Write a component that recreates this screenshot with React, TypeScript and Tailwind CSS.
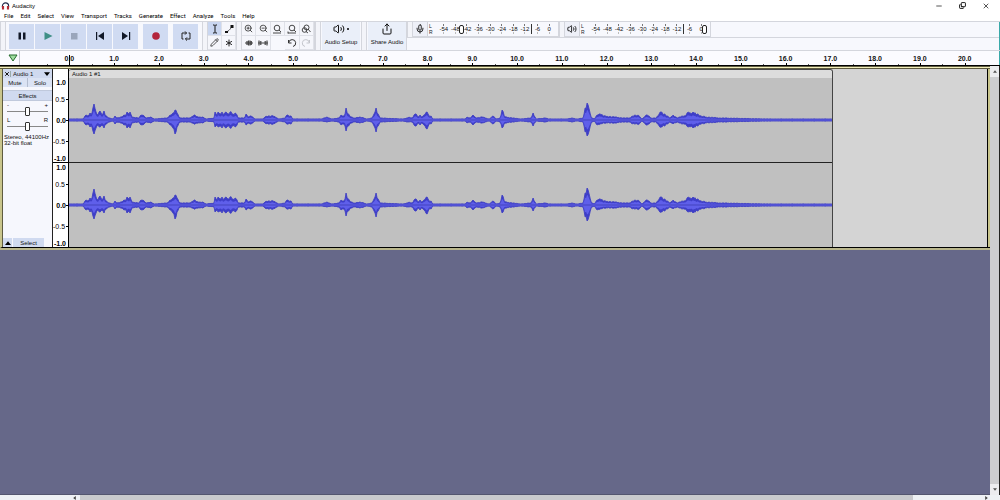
import React from 'react';
import { Asterisk, Copy, Mic, Minus, Pencil, Redo, Share, Undo, Volume2, X, ZoomIn, ZoomOut } from 'lucide-react';

const MENUS = ['File', 'Edit', 'Select', 'View', 'Transport', 'Tracks', 'Generate', 'Effect', 'Analyze', 'Tools', 'Help'];
const METER_MARKS = ['-54', '-48', '-42', '-36', '-30', '-24', '-18', '-12', '-6', '0'];
const SECONDS = Array.from({ length: 21 }, (_, i) => i.toFixed(1));

// [x, peak above, peak below] in clip pixels
const PEAKS: [number, number, number?][] = [
  [0, 1], [14, 1], [17, 5], [19, 4], [21, 7], [23, 7], [25, 16, 14], [27, 8], [29, 5], [31, 9, 7], [33, 5], [35, 9, 8],
  [37, 4], [40, 2], [44, 1], [46, 4], [48, 2], [53, 3], [55, 5], [57, 5], [58, 8], [60, 6], [61, 8], [63, 3], [70, 2],
  [72, 5], [75, 4], [77, 2], [82, 3], [85, 1], [98, 2], [101, 5], [104, 7, 8], [106, 10, 14], [108, 7], [111, 2], [121, 2],
  [125, 5, 4], [129, 3], [134, 3], [137, 1], [145, 2], [146, 8, 7], [148, 5], [149, 8, 7], [151, 6], [153, 8], [155, 6],
  [157, 8], [159, 6], [161, 8], [164, 6], [166, 7], [168, 5], [169, 2], [175, 2], [177, 6, 5], [179, 3], [182, 4], [186, 1],
  [194, 1], [197, 4], [204, 4], [210, 1], [216, 2], [218, 5, 4], [222, 4], [224, 1], [252, 1], [258, 3, 2], [262, 1],
  [270, 2], [272, 5], [274, 4], [276, 6], [277, 12, 11], [279, 6], [282, 3], [285, 2], [291, 3], [298, 1], [303, 2],
  [305, 6], [307, 12], [309, 6], [311, 2], [334, 1], [338, 2], [340, 3, 2], [343, 2], [345, 5], [347, 6], [349, 3],
  [351, 5], [353, 3], [355, 5], [358, 8, 9], [360, 4], [362, 4], [364, 1], [396, 1], [398, 3], [401, 2], [404, 5], [407, 2],
  [413, 3], [420, 1], [424, 4], [427, 1], [431, 2], [433, 10, 8], [436, 3], [444, 2], [451, 1], [462, 2], [464, 7, 6],
  [467, 1], [476, 2], [480, 1], [498, 1], [503, 2], [508, 1], [514, 2], [516, 12], [518, 17, 16], [520, 11], [522, 3],
  [525, 1], [528, 5], [531, 6, 4], [535, 4, 3], [545, 3], [554, 2], [561, 2], [563, 4], [566, 5, 4], [570, 4], [573, 1],
  [576, 4], [578, 5], [582, 2], [587, 2], [590, 6], [592, 8, 7], [595, 6], [598, 4], [601, 2], [604, 5, 4], [608, 2],
  [613, 4], [616, 4], [619, 8, 7], [622, 6], [624, 8], [628, 6], [632, 4], [637, 3], [651, 2], [700, 1], [763, 1],
];

// one sample per pixel between the peaks, slightly roughened
const SAMPLES = PEAKS.slice(1).flatMap(([x1, up1, down1 = up1], i) => {
  const [x0, up0, down0 = up0] = PEAKS[i];
  return Array.from({ length: x1 - x0 }, (_, step) => {
    const t = step / (x1 - x0);
    const x = x0 + step;
    const rough = step === 0 ? 1 : 0.8 + ((x * 37) % 11) / 30;
    return [x, (up0 + (up1 - up0) * t) * rough, (down0 + (down1 - down0) * t) * rough];
  });
});

function outline(scale: number) {
  const top = SAMPLES.map(([x, up]) => `${x},${42 - Math.max(1, up * scale)}`);
  const bottom = SAMPLES.map(([x, , down]) => `${x},${42 + Math.max(1, down * scale)}`).reverse();
  return [...top, '763,41', '763,43', ...bottom].join(' ');
}

function Waveform() {
  return (
    <svg viewBox="0 0 763 84" preserveAspectRatio="none" className="block h-[84px] w-full bg-[#c0c0c0]">
      <polygon points={outline(1)} fill="#3e3ec8" stroke="#4141c4" strokeWidth="0.9" />
      <polygon points={outline(0.6)} fill="#5f5fea" />
      <path d="M0 42H763" stroke="#3c3cb4" strokeWidth="0.8" />
    </svg>
  );
}

function AmplitudeScale() {
  return (
    <div className="flex h-[84px] flex-col text-right text-[7px] leading-none text-black">
      <div className="flex h-2 items-center justify-end pr-0.5 font-bold">1.0</div>
      <div className="flex h-[26px] items-center justify-end gap-px">0.5<i className="h-px w-0.5 bg-black" /></div>
      <div className="flex h-4 items-center justify-end font-bold">0.0<i className="h-px w-0.5 bg-black" /></div>
      <div className="flex h-[26px] items-center justify-end gap-px">-0.5<i className="h-px w-0.5 bg-black" /></div>
      <div className="flex h-2 items-center justify-end pr-0.5 font-bold">-1.0</div>
    </div>
  );
}

function TransportButton({ label, className = '', children }: { label: string; className?: string; children: React.ReactNode }) {
  return (
    <button aria-label={label} className={`flex h-[25px] w-[25px] items-center justify-center bg-[#d0dbf2] ${className}`}>
      <svg viewBox="0 0 12 12" className="h-3 w-3">{children}</svg>
    </button>
  );
}

function ToolButton({ label, active, children }: { label: string; active?: boolean; children?: React.ReactNode }) {
  return (
    <button
      aria-label={label}
      className={`flex items-center justify-center border-r border-b border-[#dfe1e8] text-[#222] ${active ? 'bg-[#c9d6f0]' : 'bg-[#f5f6fb]'}`}
    >
      {children}
    </button>
  );
}

function Grip() {
  return <div className="w-1.5 shrink-0 border-x border-[#d4d6dd] bg-[#f3f4f9]" />;
}

function Meter({ label, icon, value }: { label: string; icon: React.ReactNode; value: number }) {
  return (
    <div className="flex h-[15px] items-stretch border-r border-b border-[#d4d6dd]">
      <button aria-label={label} className="flex w-[15px] items-center justify-center border-r border-[#cfd1d8] bg-[#eef0f8]">{icon}</button>
      <div className="flex w-2.5 flex-col justify-center pl-px text-[5px] leading-[6px] text-[#222]">
        <span>L</span>
        <span>R</span>
      </div>
      <div className="relative flex w-[120px] items-center pr-[3px] text-[6px] leading-none text-[#111]">
        {METER_MARKS.map(mark => (
          <span key={mark} className={`flex flex-1 flex-col items-center ${mark === '-6' ? 'border-l border-[#333]' : ''}`}>
            <i className="h-0.5 w-px bg-[#777]" />
            {mark}
            <i className="h-0.5 w-px bg-[#bbb]" />
          </span>
        ))}
        <input
          type="range"
          aria-label={`${label} level`}
          defaultValue={value}
          className="absolute inset-0 m-0 h-full w-full appearance-none bg-transparent [&::-webkit-slider-thumb]:h-[9px] [&::-webkit-slider-thumb]:w-[5px] [&::-webkit-slider-thumb]:appearance-none [&::-webkit-slider-thumb]:rounded-[2px] [&::-webkit-slider-thumb]:border [&::-webkit-slider-thumb]:border-[#222] [&::-webkit-slider-thumb]:bg-white"
        />
      </div>
    </div>
  );
}

function TrackSlider({ label, left, right }: { label: string; left: string; right: string }) {
  return (
    <label className="flex h-[15px] flex-col px-1 text-[6px] leading-[5px] text-[#111]">
      <span className="flex justify-between">
        <span>{left}</span>
        <span>{right}</span>
      </span>
      <input
        type="range"
        aria-label={label}
        className="-mt-px h-[9px] w-full appearance-none bg-[linear-gradient(#888,#888)] bg-[length:100%_1px] bg-center bg-no-repeat [&::-webkit-slider-thumb]:h-[9px] [&::-webkit-slider-thumb]:w-[5px] [&::-webkit-slider-thumb]:appearance-none [&::-webkit-slider-thumb]:rounded-[1px] [&::-webkit-slider-thumb]:border [&::-webkit-slider-thumb]:border-[#333] [&::-webkit-slider-thumb]:bg-white"
      />
    </label>
  );
}

function TitleBar() {
  return (
    <header className="flex h-[11px] items-center bg-white pl-px text-[6px] leading-none text-black">
      <svg viewBox="0 0 10 9" className="mr-0.5 h-2 w-[9px]">
        <path d="M1.5 6V4.5a3.5 3.5 0 0 1 7 0V6" fill="none" stroke="#222a4a" strokeWidth="1.3" />
        <path d="M1 4.5h2.4V8.500H1zM6.600 4.500H9V8.500H6.600z" fill="#b52a35" />
      </svg>
      <h1 className="flex-1">Audacity</h1>
      <div className="flex gap-4 pr-2.5">
        <button aria-label="Minimize"><Minus className="h-2 w-2" /></button>
        <button aria-label="Restore"><Copy className="h-[7px] w-[7px] -scale-x-100 rotate-180" strokeWidth={3} /></button>
        <button aria-label="Close"><X className="h-2 w-2" /></button>
      </div>
    </header>
  );
}

function Toolbar() {
  return (
    <div className="flex h-[30px] items-stretch border-y border-[#d4d6dd] bg-[#f7f8fd]">
      <Grip />
      <div className="flex items-center gap-px pl-[3px]">
        <TransportButton label="Pause"><path d="M2.500 2.500H5v7H2.500zM7 2.500h2.500v7H7z" fill="#111827" /></TransportButton>
        <TransportButton label="Play"><path d="M2.500 2l8 4-8 4z" fill="#3f8f86" /></TransportButton>
        <TransportButton label="Stop"><path d="M3 3h6.500v6.500H3z" fill="#9aa6bb" /></TransportButton>
        <TransportButton label="Skip to start"><path d="M2 2h1.200v8H2zM10 2v8L4 6z" fill="#111827" /></TransportButton>
        <TransportButton label="Skip to end"><path d="M9 2h1.200v8H9zM2 2v8l6-4z" fill="#111827" /></TransportButton>
        <TransportButton label="Record" className="ml-1"><circle cx="6" cy="6" r="3.800" fill="#b3243c" /></TransportButton>
        <TransportButton label="Loop" className="ml-1">
          <path d="M6.500 3H2v6h1.500M5.500 9H10V3H8.500M5 1.400L6.600 3 5 4.600M7 7.400L5.400 9 7 10.600" fill="none" stroke="#222" strokeWidth="1" />
        </TransportButton>
      </div>
      <div className="ml-1 flex"><Grip /></div>
      <div className="grid w-7 grid-cols-2 grid-rows-2">
        <ToolButton label="Selection tool" active>
          <svg viewBox="0 0 8 10" className="h-2.5 w-2"><path d="M2 1h1.500L4 1.500 4.500 1H6M4 1.500v7M2 9h1.500L4 8.500l.5.5H6" fill="none" stroke="#111" /></svg>
        </ToolButton>
        <ToolButton label="Envelope tool">
          <svg viewBox="0 0 10 10" className="h-2.5 w-2.5">
            <path d="M2 8c2-.5 4-2 6-6" fill="none" stroke="#222" strokeWidth="0.800" />
            <path d="M1 7h3v2H1zM6.500 1h3v3h-3z" fill="#111" />
          </svg>
        </ToolButton>
        <ToolButton label="Draw tool"><Pencil className="h-[9px] w-[9px]" /></ToolButton>
        <ToolButton label="Multi-tool"><Asterisk className="h-3 w-3" /></ToolButton>
      </div>
      <Grip />
      <div className="grid w-[73px] grid-cols-5 grid-rows-2 border-r border-[#d4d6dd]">
        <ToolButton label="Zoom in"><ZoomIn className="h-[9px] w-[9px]" /></ToolButton>
        <ToolButton label="Zoom out"><ZoomOut className="h-[9px] w-[9px]" /></ToolButton>
        <ToolButton label="Fit selection to width">
          <svg viewBox="0 0 10 10" className="h-2.5 w-2.5" fill="none" stroke="#333" strokeWidth="0.900"><circle cx="5" cy="4" r="2.800" /><path d="M1 9h8M7 6l2 2" /></svg>
        </ToolButton>
        <ToolButton label="Fit project to width">
          <svg viewBox="0 0 10 10" className="h-2.5 w-2.5" fill="none" stroke="#333" strokeWidth="0.900"><circle cx="5" cy="4" r="2.800" /><path d="M1 9h8M1 7.500v2M7 6l2 2" /></svg>
        </ToolButton>
        <ToolButton label="Zoom toggle">
          <svg viewBox="0 0 10 10" className="h-2.5 w-2.5" fill="none" stroke="#333" strokeWidth="0.900"><circle cx="5.500" cy="3.500" r="2.500" /><circle cx="3.500" cy="6" r="2.300" /><path d="M7 5l2.500 3M5 7.500l2 1.500" /></svg>
        </ToolButton>
        <ToolButton label="Trim audio">
          <svg viewBox="0 0 10 8" className="h-2 w-2.5"><path d="M1 4h8M3 2v4M4.500 1.500v5M6 1.500v5M7.300 2v4" stroke="#444" strokeWidth="1.200" /></svg>
        </ToolButton>
        <ToolButton label="Silence audio">
          <svg viewBox="0 0 10 8" className="h-2 w-2.5"><path d="M0 4h10M1 1.500v5M2.800 2v4M7.200 2v4M9 1.500v5" stroke="#444" strokeWidth="1.200" /></svg>
        </ToolButton>
        <span />
        <ToolButton label="Undo">
          <svg viewBox="0 0 10 10" className="h-2.5 w-2.5" fill="none" stroke="#333"><path d="M1.500 2v3h3M1.700 4.800A3.500 3.500 0 1 1 6 8.500" /></svg>
        </ToolButton>
        <ToolButton label="Redo">
          <svg viewBox="0 0 10 10" className="h-2.5 w-2.5" fill="none" stroke="#c4c6cc"><path d="M8.500 2v3h-3M8.300 4.800A3.500 3.500 0 1 0 4 8.500" /></svg>
        </ToolButton>
      </div>
      <div className="flex gap-px text-[6px] leading-none text-[#111]">
        <Grip />
        <button className="flex w-[38px] flex-col items-center justify-end gap-1 bg-[#eaeff9] pb-[5px] whitespace-nowrap">
          <span className="flex items-center gap-0.5"><Volume2 className="h-3 w-3" /><i className="h-0.5 w-0.5 rounded-full bg-black" /></span>
          Audio Setup
        </button>
        <Grip />
        <button className="flex w-[38px] flex-col items-center justify-end gap-1 bg-[#eaeff9] pb-[5px] whitespace-nowrap">
          <Share className="h-3 w-3" />
          Share Audio
        </button>
      </div>
      <div className="flex flex-1 flex-col border-l border-[#d4d6dd]">
        <div className="flex border-b border-[#d4d6dd]">
          <Grip />
          <Meter label="Record meter" icon={<Mic className="h-2.5 w-2.5" />} value={18} />
          <Grip />
          <Meter label="Playback meter" icon={<Volume2 className="h-2.5 w-2.5" />} value={97} />
        </div>
      </div>
      <div className="w-px bg-[#3aa9a9]" />
    </div>
  );
}

function Timeline() {
  return (
    <div className="flex h-[15px] border-b border-black bg-[#fbfbff]">
      <button aria-label="Timeline options" className="flex w-5 items-center justify-end border-r border-[#c6c8cf] pr-px">
        <svg viewBox="0 0 10 8" className="h-2 w-2.5"><path d="M1 1h8L5 7z" fill="#9fdc9f" stroke="#246b2c" /></svg>
      </button>
      <div className="mr-3 ml-[27px] flex flex-1 text-[7px] leading-none font-bold text-[#111]">
        {SECONDS.map((second, i) => (
          <div key={second} className="relative flex flex-1 flex-col justify-end text-center">
            {second}
            {i === 0 && <i className="absolute top-1 left-1/2 h-[10px] w-px bg-black" />}
            <div className="flex h-[3px] items-end">
              <div className="h-px flex-1 border-l border-[#555]" />
              <div className="h-0.5 flex-1 border-l border-black" />
            </div>
          </div>
        ))}
      </div>
      <div className="w-px bg-[#3aa9a9]" />
    </div>
  );
}

function TrackPanel() {
  return (
    <div className="flex w-[50px] shrink-0 flex-col border-r border-[#222] bg-[#f6f7fd] text-[6px] leading-none text-[#111]">
      <div className="flex h-[9px] items-center bg-[#cfd9ef]">
        <button aria-label="Close track" className="flex w-2 justify-center border-r border-[#9aa]"><X className="h-1.5 w-1.5" strokeWidth={4} /></button>
        <button className="flex flex-1 items-center justify-between px-0.5">
          Audio 1
          <svg viewBox="0 0 8 5" className="h-1 w-1.5"><path d="M0 0h8L4 5z" /></svg>
        </button>
      </div>
      <div className="grid h-[9px] grid-cols-2 gap-px bg-[#b4bdd0]">
        <button className="bg-[#dbe3f4]">Mute</button>
        <button className="bg-[#dbe3f4]">Solo</button>
      </div>
      <button className="mt-[3px] mb-0.5 h-[11px] border-y border-[#c0c9dc] bg-[#d0daf0]">Effects</button>
      <TrackSlider label="Gain" left="-" right="+" />
      <TrackSlider label="Pan" left="L" right="R" />
      <p className="mt-px pl-px text-[6px] leading-[6px] whitespace-nowrap">Stereo, 44100Hz<br />32-bit float</p>
      <div className="mt-auto flex h-[9px]">
        <button aria-label="Collapse track" className="flex w-[9px] items-center justify-center bg-[#d0daf0]">
          <svg viewBox="0 0 8 5" className="h-1 w-1.5"><path d="M0 5h8L4 0z" /></svg>
        </button>
        <button className="ml-px w-[31px] bg-[#d0daf0]">Select</button>
      </div>
    </div>
  );
}

function Track() {
  return (
    <section className="flex flex-col border-b-2 border-[#b9b68c] bg-[#d4d4d4]">
      <div className="h-[3px] border-y border-[#5e5b40] bg-[#f3efbd]" />
      <div className="flex border-b border-l-2 border-b-black border-l-[#c9c58c]">
        <div className="w-px bg-[#5e5b40]" />
        <TrackPanel />
        <div className="flex w-4 shrink-0 flex-col border-r border-black bg-white pt-[9px]">
          <AmplitudeScale />
          <div className="h-px bg-black" />
          <AmplitudeScale />
        </div>
        <div className="flex min-w-0 flex-1 border-r border-black">
          <div className="min-w-0 flex-[764] overflow-hidden rounded-t-[3px] border-t border-r border-[#444]">
            <h2 className="h-2 bg-[#dcdcdc] pl-[3px] text-[6px] leading-[8px] text-[#111]">Audio 1 #1</h2>
            <Waveform />
            <div className="h-px bg-[#222]" />
            <Waveform />
          </div>
          <div className="flex-[154]" />
        </div>
        <div className="w-0.5 bg-[#c9c58c]" />
      </div>
    </section>
  );
}

export default function App() {
  return (
    <div className="flex min-h-screen flex-col bg-[#666889] font-['Liberation_Sans',Arial,sans-serif]">
      <TitleBar />
      <nav className="flex h-2.5 items-center gap-[7px] bg-white pl-1 font-[Roboto,sans-serif] text-[6px] leading-none text-black">
        {MENUS.map(menu => <button key={menu}>{menu}</button>)}
      </nav>
      <Toolbar />
      <Timeline />
      <div className="flex flex-1">
        <main className="flex min-w-0 flex-1 flex-col border-b border-[#54566f]">
          <Track />
        </main>
        <aside className="flex w-2.5 flex-col items-center gap-1 border-r border-[#222] bg-[#ececef] py-1">
          <svg viewBox="0 0 6 4" className="h-[3px] w-1"><path d="M0 4l3-4 3 4z" fill="#555" /></svg>
          <div className="w-full flex-1 bg-[#cdcdd0]" />
          <svg viewBox="0 0 6 4" className="h-[3px] w-1"><path d="M0 0l3 4 3-4z" fill="#555" /></svg>
        </aside>
      </div>
      <footer className="flex h-[5px] items-center bg-[#eef1f4] pr-3 pl-[73px]">
        <svg viewBox="0 0 4 6" className="h-1 w-[3px]"><path d="M4 0L0 3l4 3z" fill="#444" /></svg>
        <div className="ml-1 h-full w-[91%] bg-[#c9cacd]" />
        <svg viewBox="0 0 4 6" className="ml-auto h-1 w-[3px]"><path d="M0 0l4 3-4 3z" fill="#444" /></svg>
      </footer>
    </div>
  );
}
